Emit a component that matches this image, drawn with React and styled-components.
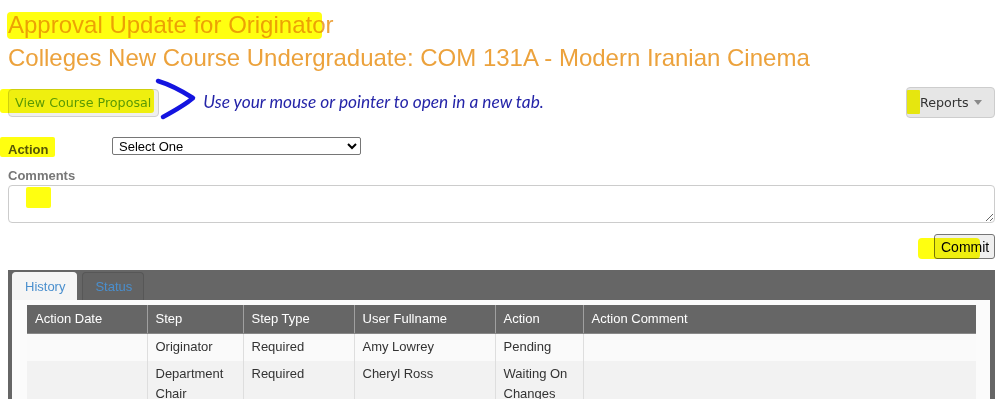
import React from "react";
import styled, { createGlobalStyle } from "styled-components";

const GlobalStyle = createGlobalStyle`
  html, body { margin: 0; padding: 0; background: #fff; }
  body { font-family: "Liberation Sans", Arial, sans-serif; color: #333; }
  * { box-sizing: border-box; }
`;

const Page = styled.div`
  position: relative;
  padding: 8px 12px 0 8px;
`;

const Title = styled.h1`
  margin: 0;
  font-family: "Liberation Sans", Arial, sans-serif;
  font-weight: normal;
  font-size: 24px;
  line-height: 33px;
  color: #eca23c;
  white-space: nowrap;
`;

const Toolbar = styled.div`
  display: flex;
  align-items: center;
  justify-content: space-between;
  margin-top: 13px;
  height: 31px;
`;

const ToolLeft = styled.div`
  display: flex;
  align-items: center;
`;

const ViewButton = styled.button`
  height: 28px;
  padding: 0 7px 0 6px;
  border: 1px solid #cfcfcf;
  border-radius: 4px;
  background: #efefef;
  color: #5b9a2c;
  font-family: "DejaVu Sans", Verdana, sans-serif;
  font-size: 12.7px;
  cursor: pointer;
`;

const Hint = styled.span`
  margin-left: 44px;
  margin-top: -2px;
  font-family: Lato, "Liberation Sans", sans-serif;
  font-style: italic;
  font-size: 17.3px;
  color: #2424a8;
`;

const ReportsButton = styled.button`
  display: flex;
  align-items: center;
  gap: 5px;
  width: 89px;
  height: 31px;
  padding: 0 0 0 13px;
  border: 1px solid #cdcdcd;
  border-radius: 4px;
  background: #e6e6e6;
  color: #333;
  font-family: "DejaVu Sans", Verdana, sans-serif;
  font-size: 12.7px;
`;

const Caret = styled.span`
  width: 0;
  height: 0;
  border-left: 4px solid transparent;
  border-right: 4px solid transparent;
  border-top: 5px solid #8a8a8a;
`;

const FieldRow = styled.div`
  display: flex;
  align-items: flex-start;
  margin-top: 19px;
`;

const Label = styled.label`
  display: block;
  font-weight: bold;
  font-size: 13px;
  line-height: 16px;
  color: ${(p) => p.$color || "#555"};
`;

const ActionLabel = styled(Label)`
  width: 104px;
  padding-top: 5px;
`;

const Select = styled.select`
  width: 249px;
  height: 18px;
  padding: 0 2px;
  border: 1px solid #767676;
  border-radius: 2px;
  background: #fff;
  font-family: "Liberation Sans", Arial, sans-serif;
  font-size: 13px;
  color: #000;
`;

const CommentsLabel = styled(Label)`
  margin-top: 10px;
`;

const TextArea = styled.textarea`
  display: block;
  width: 100%;
  height: 38px;
  margin-top: 1px;
  border: 1px solid #cccccc;
  border-radius: 4px;
  resize: vertical;
  font-family: "Liberation Sans", Arial, sans-serif;
  font-size: 13px;
`;

const CommitRow = styled.div`
  display: flex;
  justify-content: flex-end;
  margin-top: 11px;
`;

const CommitButton = styled.button`
  width: 61px;
  height: 25px;
  border: 1px solid #767676;
  border-radius: 3px;
  background: #efefef;
  color: #000;
  font-family: "Liberation Sans", Arial, sans-serif;
  font-size: 14px;
`;

const Panel = styled.div`
  margin-top: 11px;
  background: #666;
  padding: 2px 5px 20px 4px;
`;

const Tabs = styled.div`
  display: flex;
  gap: 5px;
`;

const Tab = styled.div`
  height: 28px;
  padding: 0 11px 0 12px;
  display: flex;
  align-items: center;
  border-radius: 4px 4px 0 0;
  font-size: 13px;
  color: #4a8fce;
  background: ${(p) => (p.$active ? "#f5f5f5" : "#636363")};
  border: 1px solid ${(p) => (p.$active ? "#f5f5f5" : "#575757")};
  border-bottom: none;
`;

const TabBody = styled.div`
  background: #fbfbfb;
  padding: 5px 14px 20px 15px;
`;

const Table = styled.table`
  width: 100%;
  border-collapse: collapse;
  table-layout: fixed;
  font-size: 13px;
`;

const Th = styled.th`
  height: 28px;
  padding: 0 8px;
  background: #666;
  color: #fff;
  font-weight: normal;
  text-align: left;
  border-left: 1px solid #a0a0a0;
  border-bottom: 1px solid #888;
  &:first-child { border-left: none; }
`;

const Tr = styled.tr`
  background: ${(p) => (p.$alt ? "#f2f2f2" : "#fafafa")};
`;

const Td = styled.td`
  padding: 3px 8px 4px;
  line-height: 20px;
  vertical-align: top;
  color: #333;
  border-left: 1px solid #dedede;
  &:first-child { border-left: none; }
`;

const Overlay = styled.div`
  position: absolute;
  inset: 0;
  pointer-events: none;
`;

const Mark = styled.div`
  position: absolute;
  left: ${(p) => p.$x}px;
  top: ${(p) => p.$y}px;
  width: ${(p) => p.$w}px;
  height: ${(p) => p.$h}px;
  background: #ffff10;
  mix-blend-mode: multiply;
  border-radius: ${(p) => p.$r || 2}px;
`;

const Bracket = styled.svg`
  position: absolute;
  left: 152px;
  top: 76px;
`;

const columns = [120, 96, 111, 141, 88];
const headers = ["Action Date", "Step", "Step Type", "User Fullname", "Action", "Action Comment"];
const rows = [
  ["", "Originator", "Required", "Amy Lowrey", "Pending", ""],
  ["", "Department Chair", "Required", "Cheryl Ross", "Waiting On Changes", ""],
];

export default function App() {
  return (
    <>
      <GlobalStyle />
      <Page>
        <Title>Approval Update for Originator</Title>
        <Title>Colleges New Course Undergraduate: COM 131A - Modern Iranian Cinema</Title>

        <Toolbar>
          <ToolLeft>
            <ViewButton>View Course Proposal</ViewButton>
            <Hint>Use your mouse or pointer to open in a new tab.</Hint>
          </ToolLeft>
          <ReportsButton>
            Reports <Caret />
          </ReportsButton>
        </Toolbar>

        <FieldRow>
          <ActionLabel>Action</ActionLabel>
          <Select defaultValue="">
            <option value="">Select One</option>
          </Select>
        </FieldRow>

        <CommentsLabel $color="#777">Comments</CommentsLabel>
        <TextArea />

        <CommitRow>
          <CommitButton>Commit</CommitButton>
        </CommitRow>

        <Panel>
          <Tabs>
            <Tab $active>History</Tab>
            <Tab>Status</Tab>
          </Tabs>
          <TabBody>
            <Table>
              <colgroup>
                {columns.map((w, i) => (
                  <col key={i} style={{ width: w }} />
                ))}
                <col />
              </colgroup>
              <thead>
                <tr>
                  {headers.map((h) => (
                    <Th key={h}>{h}</Th>
                  ))}
                </tr>
              </thead>
              <tbody>
                {rows.map((r, i) => (
                  <Tr key={i} $alt={i % 2 === 1}>
                    {r.map((c, j) => (
                      <Td key={j}>{c}</Td>
                    ))}
                  </Tr>
                ))}
              </tbody>
            </Table>
          </TabBody>
        </Panel>

        <Overlay>
          <Mark $x={7} $y={12} $w={315} $h={27} $r={4} />
          <Mark $x={0} $y={89} $w={154} $h={24} $r={3} />
          <Mark $x={907} $y={90} $w={13} $h={24} $r={1} />
          <Mark $x={0} $y={137} $w={55} $h={20} $r={2} />
          <Mark $x={26} $y={187} $w={25} $h={21} $r={0} />
          <Mark $x={918} $y={238} $w={62} $h={21} $r={4} />
          <Bracket width="48" height="46" viewBox="0 0 48 46">
            <path
              d="M6 5 C16 8 30 15 41 22 C33 29 22 35 11 41"
              fill="none"
              stroke="#1414e0"
              strokeWidth="4.5"
              strokeLinecap="round"
              strokeLinejoin="round"
            />
          </Bracket>
        </Overlay>
      </Page>
    </>
  );
}
